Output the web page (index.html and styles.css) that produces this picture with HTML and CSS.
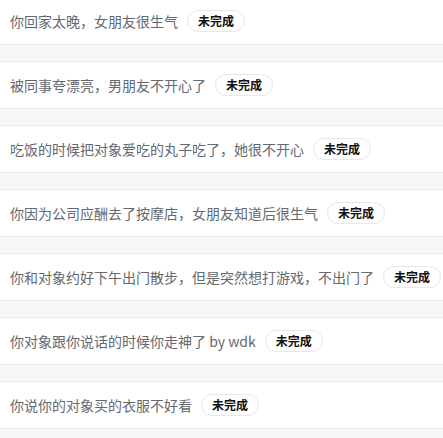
FILE: index.html
```html
<!DOCTYPE html>
<html lang="zh-CN">
<head>
  <meta charset="UTF-8">
  <title>任务列表</title>
  <link rel="stylesheet" href="styles.css">
</head>
<body>
  <ul class="task-list">
    <li class="task-item"><span class="task-title">你回家太晚，女朋友很生气</span><span class="tag">未完成</span></li>
    <li class="task-item"><span class="task-title">被同事夸漂亮，男朋友不开心了</span><span class="tag">未完成</span></li>
    <li class="task-item"><span class="task-title">吃饭的时候把对象爱吃的丸子吃了，她很不开心</span><span class="tag">未完成</span></li>
    <li class="task-item"><span class="task-title">你因为公司应酬去了按摩店，女朋友知道后很生气</span><span class="tag">未完成</span></li>
    <li class="task-item"><span class="task-title">你和对象约好下午出门散步，但是突然想打游戏，不出门了</span><span class="tag">未完成</span></li>
    <li class="task-item"><span class="task-title">你对象跟你说话的时候你走神了 by wdk</span><span class="tag">未完成</span></li>
    <li class="task-item"><span class="task-title">你说你的对象买的衣服不好看</span><span class="tag">未完成</span></li>
  </ul>
</body>
</html>
```

FILE: styles.css
```css
body {
  margin: 0;
  background: #f7f8fa;
  font-family: "Noto Sans CJK SC", "Noto Sans", sans-serif;
  overflow: hidden;
}

.task-list {
  list-style: none;
  margin: -3px 0 0;
  padding: 0;
}

.task-item {
  display: flex;
  align-items: center;
  height: 46px;
  padding: 0 10px;
  margin-bottom: 16px;
  background: #fff;
  border-top: 1px solid #e8eaef;
  border-bottom: 1px solid #e8eaef;
  white-space: nowrap;
}

.task-title {
  font-size: 14px;
  color: #646870;
}

.tag {
  margin-left: 9px;
  height: 20px;
  line-height: 20px;
  padding: 0 10px;
  border: 1px solid #e6e8f0;
  border-radius: 11px;
  background: #fff;
  font-size: 12px;
  font-weight: bold;
  color: #111;
}
```
